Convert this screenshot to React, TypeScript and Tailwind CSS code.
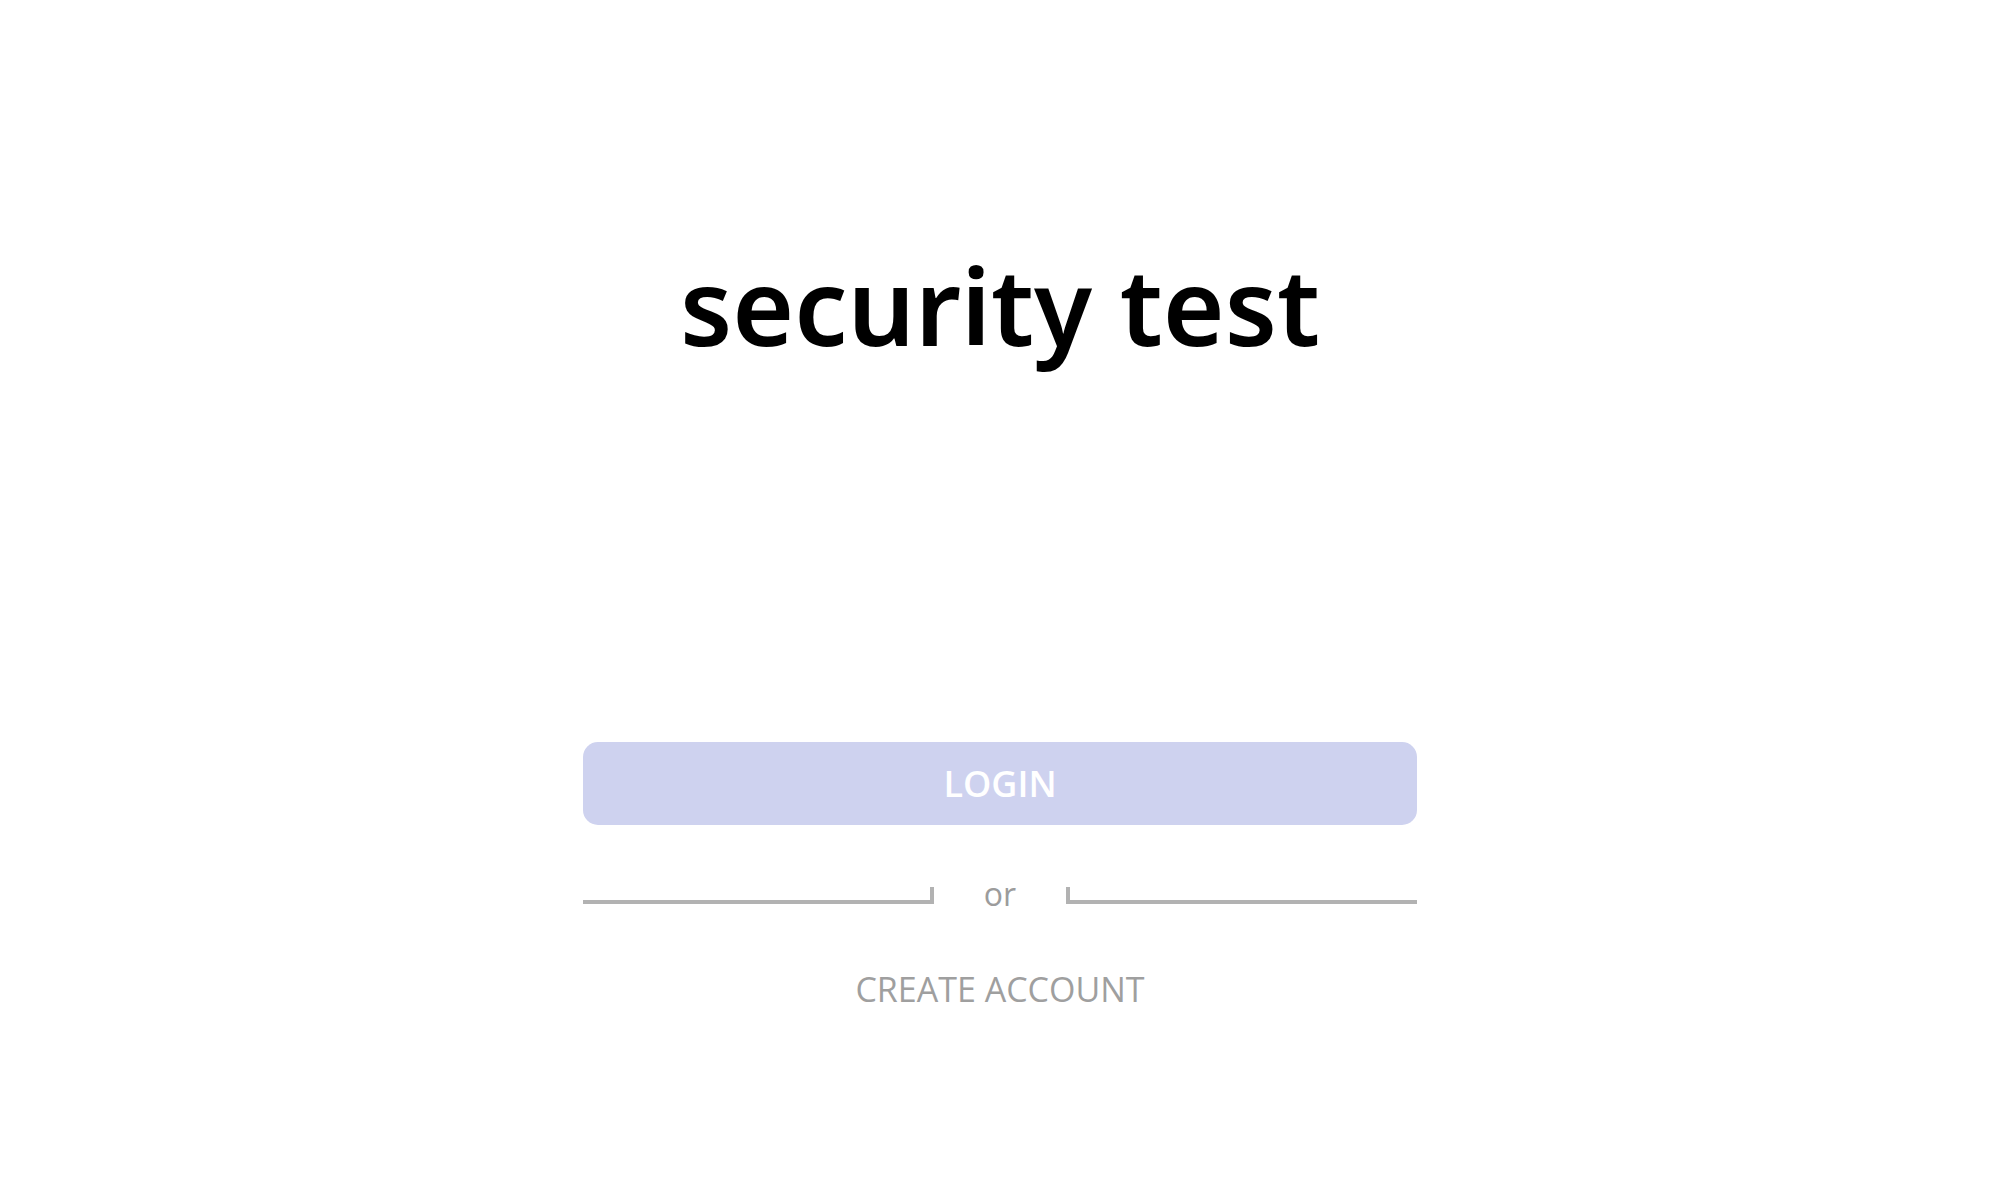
import React from "react";

export default function App() {
  return (
    <div className="min-h-[1200px] w-full bg-white flex flex-col items-center">
      <h1
        className="mt-[252px] text-[106px] leading-none font-semibold text-black"
        style={{ fontFamily: '"Noto Sans", sans-serif' }}
      >
        security test
      </h1>
      <div className="w-[834px] mt-[384px] flex flex-col items-center" style={{ fontFamily: '"Open Sans", sans-serif' }}>
        <button className="w-full h-[83px] rounded-[15px] bg-[#ced2ef] text-white text-[36px] font-semibold leading-none flex items-center justify-center">
          LOGIN
        </button>
        <div className="w-full mt-[53px] flex items-end">
          <div className="flex-1 h-[17px] border-b-4 border-r-4 border-[#b2b2b2]" />
          <div className="w-[132px] text-center text-[32px] leading-none text-[#9c9c9c] mb-[-6px]">or</div>
          <div className="flex-1 h-[17px] border-b-4 border-l-4 border-[#b2b2b2]" />
        </div>
        <div className="mt-[68px] text-[34px] leading-none font-medium text-[#9f9f9f]">CREATE ACCOUNT</div>
      </div>
    </div>
  );
}
